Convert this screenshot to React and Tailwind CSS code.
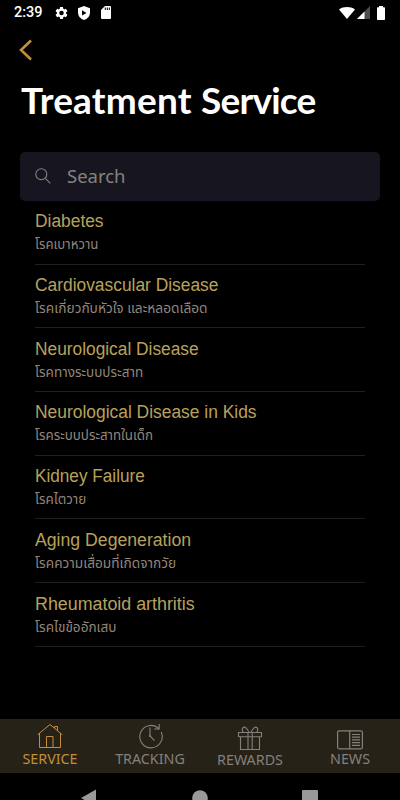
const services = [
  { name: 'Diabetes', thai: 'โรคเบาหวาน', nameFit: 'scale-x-[0.965]', thaiFit: 'scale-x-[0.945]' },
  { name: 'Cardiovascular Disease', thai: 'โรคเกี่ยวกับหัวใจ และหลอดเลือด', nameFit: 'scale-x-[0.965]', thaiFit: 'scale-x-[0.98]' },
  { name: 'Neurological Disease', thai: 'โรคทางระบบประสาท', nameFit: 'scale-x-[0.962]', thaiFit: 'scale-x-[0.965]' },
  { name: 'Neurological Disease in Kids', thai: 'โรคระบบประสาทในเด็ก', nameFit: 'scale-x-[0.967]', thaiFit: 'scale-x-[0.953]' },
  { name: 'Kidney Failure', thai: 'โรคไตวาย', nameFit: 'scale-x-[0.954]', thaiFit: 'scale-x-[0.957]' },
  { name: 'Aging Degeneration', thai: 'โรคความเสื่อมที่เกิดจากวัย', nameFit: 'scale-x-[0.981]', thaiFit: 'scale-x-[0.977]' },
  { name: 'Rheumatoid arthritis', thai: 'โรคไขข้ออักเสบ', nameFit: 'scale-x-[0.991]', thaiFit: 'scale-x-[0.97]' },
];

function StatusBar() {
  return (
    <div className="flex h-[25px] items-center pl-[14px] pr-[15px] text-white">
      <span className="w-[40px] pt-[2px] font-['Roboto',sans-serif] text-[14.5px] font-medium leading-none">2:39</span>
      <svg className="h-[16px] w-[15px]" viewBox="0 0 24 24" fill="currentColor">
        <path d="M19.14 12.94c.04-.3.06-.61.06-.94s-.02-.64-.07-.94l2.03-1.58a.49.49 0 0 0 .12-.61l-1.92-3.32a.49.49 0 0 0-.59-.22l-2.39.96a7 7 0 0 0-1.62-.94l-.36-2.54a.48.48 0 0 0-.48-.41h-3.84a.47.47 0 0 0-.47.41l-.36 2.54c-.59.24-1.13.57-1.62.94l-2.39-.96a.47.47 0 0 0-.59.22L2.74 8.87a.47.47 0 0 0 .12.61l2.03 1.58a5.9 5.9 0 0 0 0 1.88l-2.03 1.58a.49.49 0 0 0-.12.61l1.92 3.32c.12.22.37.29.59.22l2.39-.96c.5.38 1.03.7 1.62.94l.36 2.54c.05.24.24.41.48.41h3.84c.24 0 .44-.17.47-.41l.36-2.54a7 7 0 0 0 1.62-.94l2.39.96c.22.08.47 0 .59-.22l1.92-3.32a.47.47 0 0 0-.12-.61zM12 15.6a3.6 3.6 0 1 1 0-7.2 3.6 3.6 0 0 1 0 7.2z" />
      </svg>
      <svg className="ml-[9px] h-[14px] w-[12px]" viewBox="0 0 12 14">
        <path d="M6 0 0 2.3v4.2C0 10 2.5 13 6 14c3.5-1 6-4 6-7.5V2.3z" fill="white" />
        <path d="M4 4.2v5.4l4.5-2.7z" fill="black" />
      </svg>
      <svg className="ml-[11px] h-[13px] w-[10px]" viewBox="0 0 10 13">
        <path d="M4 0h5a1 1 0 0 1 1 1v11a1 1 0 0 1-1 1H1a1 1 0 0 1-1-1V4z" fill="white" />
        <path d="M4.3 1.5V4M6.3 1.5V4M8.3 1.5V4" stroke="black" strokeWidth="1" />
      </svg>
      <div className="ml-auto flex items-center">
        <svg className="h-[12px] w-[16px]" viewBox="0 0 16 12">
          <path d="M0 2.4C4.5-.8 11.5-.8 16 2.4L8 12z" fill="white" />
        </svg>
        <svg className="ml-[2px] h-[13px] w-[13px]" viewBox="0 0 13 13">
          <path d="M13 0v13H0z" fill="#4d4d4d" />
          <path d="M7.5 5.5V13H0z" fill="white" />
        </svg>
        <svg className="ml-[7px] h-[14px] w-[8px]" viewBox="0 0 8 14">
          <path d="M2 0h4v1.3h1.3q.7 0 .7.7v11.3q0 .7-.7.7H.7q-.7 0-.7-.7V2q0-.7.7-.7H2z" fill="white" />
        </svg>
      </div>
    </div>
  );
}

function HouseIcon() {
  return (
    <svg className="h-[26px] w-[26px]" viewBox="0 0 26 26" fill="none" stroke="currentColor" strokeWidth="1">
      <path d="M.7 11.7 13 1.5l12.3 10.2M2.5 10v14.5h21V10M9.500 24.500V13.500h6.500v11M17.500 5V3.500h3v4" />
    </svg>
  );
}

function ClockIcon() {
  return (
    <svg className="-ml-[1px] h-[26px] w-[26px]" viewBox="0 0 26 26" fill="none" stroke="currentColor" strokeWidth="1.1">
      <path d="M21.8 5.6A11.2 11.2 0 1 0 24.200 9M22.200 1v5h-5" />
      <path d="M13 4.5V13l4.500 4.700" />
      <circle cx="13" cy="13" r="1" fill="currentColor" stroke="none" />
    </svg>
  );
}

function GiftIcon() {
  return (
    <svg className="h-[26px] w-[26px]" viewBox="0 0 26 26" fill="none" stroke="currentColor" strokeWidth="1.1">
      <path d="M1.5 6.5h23v4.200h-23zM3.500 10.700v12.800h19V10.700M11 6.500v17M15.200 6.500v17" />
      <path d="M12 6.5C10.5 2.5 8 .3 6.2 1.5 4.4 3 5.3 5 6.3 6.5M14 6.5c1.5-4 4-6.200 5.800-5 1.800 1.500.9 3.500-.1 5" />
    </svg>
  );
}

function NewsIcon() {
  return (
    <svg className="h-[20px] w-[26px]" viewBox="0 0 26 20" fill="none" stroke="currentColor" strokeWidth="1.2">
      <rect x=".6" y=".8" width="24.8" height="18" rx="1.5" />
      <path d="M12.700.8v18M15 4.500h8M15 7.200h8M15 9.900h8M15 12.600h8M15 15.300h8" />
    </svg>
  );
}

const tabs = [
  { label: 'SERVICE', Icon: HouseIcon, cls: 'pt-[4px] text-[#c38e3a]', labelCls: 'mt-0' },
  { label: 'TRACKING', Icon: ClockIcon, cls: 'pt-[4px] text-[#84807c]', labelCls: 'mt-0' },
  { label: 'REWARDS', Icon: GiftIcon, cls: 'pt-[7px] text-[#84807c]', labelCls: '-mt-[2px]' },
  { label: 'NEWS', Icon: NewsIcon, cls: 'pt-[11px] text-[#84807c]', labelCls: '-mt-[1px]' },
];

export default function App() {
  return (
    <div className="flex h-[800px] w-[400px] flex-col overflow-hidden bg-black">
      <StatusBar />
      <div className="flex h-[50px] items-center pl-[18px]">
        <svg className="h-[22px] w-[14px]" viewBox="0 0 14 22" fill="none">
          <path d="M13 1.5 3 11 13 20.5" stroke="#c08e3e" strokeWidth="2.6" />
        </svg>
      </div>
      <h1 className="h-[77px] whitespace-nowrap pl-[21px] pt-[3px] font-['Lato',sans-serif] text-[37px] font-bold leading-[44px] text-white">
        <span className="tracking-[0.2px]">Treatment </span>
        <span className="tracking-[-0.75px]"> Service</span>
      </h1>
      <div className="mx-[20px] flex h-[49px] shrink-0 items-center rounded-[5px] bg-[#171620] pb-[2px] pl-[15px] text-[#85827e]">
        <svg className="h-[16px] w-[16px]" viewBox="0 0 16 16" fill="none" stroke="currentColor" strokeWidth="1.1">
          <circle cx="6.3" cy="6.3" r="5.5" />
          <path d="m10.3 10.3 5 5" />
        </svg>
        <span className="ml-[16px] font-['Noto_Sans',sans-serif] text-[18.5px]">Search</span>
      </div>
      <ul className="mx-[35px]">
        {services.map((s) => (
          <li key={s.name} className="flex h-[63.7px] flex-col items-start border-b border-[#202020] pt-[8.4px]">
            <span className={`origin-left whitespace-nowrap font-['Liberation_Sans',sans-serif] text-[18px] leading-[24px] text-[#b9a05c] ${s.nameFit}`}>{s.name}</span>
            <span className={`origin-left whitespace-nowrap font-['Noto_Sans_Thai','Noto_Sans',sans-serif] text-[14px] leading-[23px] text-[#92867c] ${s.thaiFit}`}>{s.thai}</span>
          </li>
        ))}
      </ul>
      <nav className="mt-auto grid h-[54px] shrink-0 grid-cols-4 bg-[#262218]">
        {tabs.map(({ label, Icon, cls, labelCls }) => (
          <div key={label} className={`flex flex-col items-center ${cls}`}>
            <Icon />
            <span className={`font-['Noto_Sans',sans-serif] text-[14.3px] leading-[20px] ${labelCls}`}>{label}</span>
          </div>
        ))}
      </nav>
      <div className="flex h-[27px] shrink-0 justify-between overflow-hidden pl-[81px] pr-[82px] pt-[16px]">
        <svg className="h-[18px] w-[15px]" viewBox="0 0 15 18"><path d="M15 .5v17L0 9z" fill="#999" /></svg>
        <svg className="ml-[2px] h-[18px] w-[16px]" viewBox="0 0 16 18"><circle cx="8" cy="9" r="7.8" fill="#999" /></svg>
        <svg className="h-[18px] w-[16px]" viewBox="0 0 16 18"><rect y="1" width="16" height="16" rx="1" fill="#999" /></svg>
      </div>
    </div>
  );
}
